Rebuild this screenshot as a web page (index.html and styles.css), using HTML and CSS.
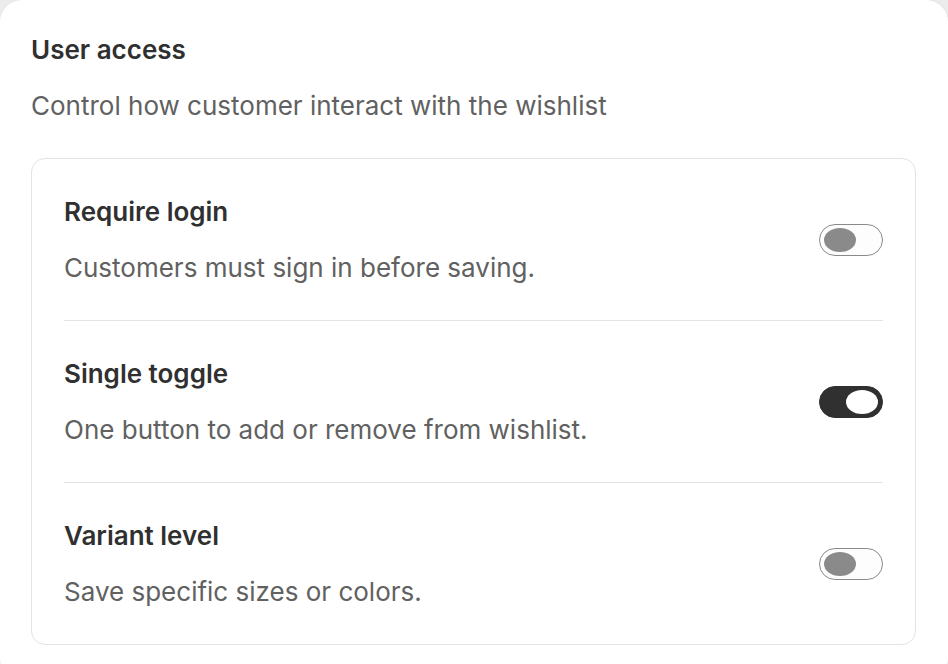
FILE: index.html
```html
<!DOCTYPE html>
<html>
<head>
<meta charset="utf-8">
<link rel="stylesheet" href="styles.css">
</head>
<body>
<div class="card">
  <h2 class="title">User access</h2>
  <p class="subtitle">Control how customer interact with the wishlist</p>
  <div class="panel">
    <div class="row">
      <div class="text">
        <div class="row-title">Require login</div>
        <div class="row-desc">Customers must sign in before saving.</div>
      </div>
      <div class="toggle"><span class="knob"></span></div>
    </div>
    <div class="row">
      <div class="text">
        <div class="row-title">Single toggle</div>
        <div class="row-desc">One button to add or remove from wishlist.</div>
      </div>
      <div class="toggle on"><span class="knob"></span></div>
    </div>
    <div class="row">
      <div class="text">
        <div class="row-title">Variant level</div>
        <div class="row-desc">Save specific sizes or colors.</div>
      </div>
      <div class="toggle"><span class="knob"></span></div>
    </div>
  </div>
</div>
</body>
</html>
```
FILE: styles.css
```css
html, body {
  margin: 0;
  padding: 0;
}
body {
  background: #ececec;
  font-family: Inter, "Noto Sans", sans-serif;
  width: 948px;
  height: 664px;
  overflow: hidden;
}
.card {
  box-sizing: border-box;
  width: 948px;
  height: 680px;
  background: #ffffff;
  border-radius: 22px;
  padding: 30px 32px 0 31px;
  box-shadow: 0 0 0 1px #e6e6e6;
}
.title {
  margin: 0;
  font-size: 26px;
  line-height: 40px;
  font-weight: 600;
  color: #303030;
}
.subtitle {
  margin: 16px 0 0;
  font-size: 26px;
  line-height: 40px;
  color: #616161;
}
.panel {
  margin-top: 32px;
  border: 1px solid #e3e3e3;
  border-radius: 14px;
  padding: 0 32px;
  background: #fff;
}
.row {
  display: flex;
  align-items: center;
  justify-content: space-between;
  height: 161px;
  border-bottom: 1px solid #e3e3e3;
}
.row:last-child {
  border-bottom: none;
}
.text {
  display: flex;
  flex-direction: column;
  gap: 16px;
}
.row-title {
  font-size: 26px;
  line-height: 40px;
  font-weight: 600;
  color: #303030;
}
.row-desc {
  font-size: 26px;
  line-height: 40px;
  color: #616161;
}
.toggle {
  box-sizing: border-box;
  width: 64px;
  height: 32px;
  border: 1px solid #8a8a8a;
  border-radius: 16px;
  background: #fdfdfd;
  display: flex;
  align-items: center;
  padding: 0 4px;
}
.knob {
  width: 32px;
  height: 24px;
  border-radius: 50%;
  background: #8a8a8a;
}
.toggle.on {
  background: #303030;
  border-color: #303030;
  justify-content: flex-end;
}
.toggle.on .knob {
  background: #ffffff;
}
```
